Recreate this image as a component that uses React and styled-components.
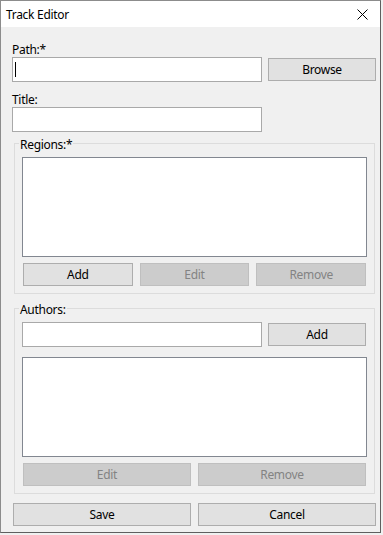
import React from 'react';
import styled, { createGlobalStyle } from 'styled-components';

const GlobalStyle = createGlobalStyle`
  html, body {
    margin: 0;
    padding: 0;
    background: #f0f0f0;
  }
  body {
    font-family: "Noto Sans", "Liberation Sans", sans-serif;
    font-size: 12px;
    letter-spacing: -0.3px;
    color: #000;
  }
`

const Window = styled.div`
  box-sizing: border-box;
  width: 381px;
  height: 533px;
  display: flex;
  flex-direction: column;
  border: 1px solid #8c8c8c;
  border-right-color: #5f5f5f;
  border-bottom-color: #5f5f5f;
  background: #f0f0f0;
`

const TitleBar = styled.div`
  height: 26px;
  flex: none;
  display: flex;
  align-items: center;
  justify-content: space-between;
  background: #fff;
  padding: 0 12px 0 5px;
`

const TitleText = styled.span`
  line-height: 15px;
`

const Client = styled.div`
  flex: 1;
  display: flex;
  flex-direction: column;
  padding: 0 3px 0 11px;
`

const Label = styled.div`
  line-height: 15px;
  margin-top: ${p => p.$top}px;
`

const Row = styled.div`
  display: flex;
  align-items: flex-start;
  gap: 6px;
  margin-top: ${p => p.$top || 0}px;
`

const TextBox = styled.div`
  box-sizing: border-box;
  width: ${p => p.$width}px;
  height: 25px;
  background: #fff;
  border: 1px solid #a9a9a9;
  position: relative;
`

const Caret = styled.span`
  position: absolute;
  left: 2px;
  top: 4px;
  width: 1px;
  height: 15px;
  background: #000;
`

const Button = styled.div`
  box-sizing: border-box;
  height: 23px;
  width: ${p => (p.$width ? `${p.$width}px` : 'auto')};
  margin-top: ${p => p.$top || 0}px;
  display: flex;
  align-items: center;
  justify-content: center;
  line-height: 15px;
  padding-bottom: 1px;
  background: ${p => (p.$disabled ? '#cccccc' : '#e1e1e1')};
  border: 1px solid ${p => (p.$disabled ? '#bfbfbf' : '#adadad')};
  color: ${p => (p.$disabled ? '#838383' : '#000')};
`

const Group = styled.fieldset`
  margin: ${p => p.$top}px 2px 0 2px;
  padding: 0 7px 7px 7px;
  border: 1px solid #dcdcdc;
  min-width: 0;
`

const Legend = styled.legend`
  padding: 0 1px;
  margin-left: -3px;
  line-height: 15px;
  position: relative;
  top: 1px;
`

const ListBox = styled.div`
  box-sizing: border-box;
  height: 100px;
  margin-top: ${p => p.$top}px;
  background: #fff;
  border: 1px solid #828790;
`

const ButtonGrid = styled.div`
  display: grid;
  grid-template-columns: repeat(${p => p.$cols}, 1fr);
  gap: 7px;
  margin: ${p => p.$top}px ${p => p.$inset}px 0 ${p => p.$inset}px;
`

const CloseIcon = () => (
  <svg width="11" height="11" viewBox="0 0 11 11">
    <path d="M0.5 0.5 L10.5 10.5 M10.5 0.5 L0.5 10.5" stroke="#000" strokeWidth="1" fill="none" />
  </svg>
)

export default function App() {
  return (
    <>
      <GlobalStyle />
      <Window>
        <TitleBar>
          <TitleText>Track Editor</TitleText>
          <CloseIcon />
        </TitleBar>
        <Client>
          <Label $top={15}>Path:*</Label>
          <Row>
            <TextBox $width={250}><Caret /></TextBox>
            <Button $width={108} $top={1}>Browse</Button>
          </Row>
          <Label $top={10}>Title:</Label>
          <Row>
            <TextBox $width={250} />
          </Row>

          <Group $top={4}>
            <Legend>Regions:*</Legend>
            <ListBox $top={6} />
            <ButtonGrid $cols={3} $top={6} $inset={1}>
              <Button>Add</Button>
              <Button $disabled>Edit</Button>
              <Button $disabled>Remove</Button>
            </ButtonGrid>
          </Group>

          <Group $top={7}>
            <Legend>Authors:</Legend>
            <Row $top={6}>
              <TextBox $width={240} />
              <Button $width={98} $top={1}>Add</Button>
            </Row>
            <ListBox $top={10} />
            <ButtonGrid $cols={2} $top={6} $inset={1}>
              <Button $disabled>Edit</Button>
              <Button $disabled>Remove</Button>
            </ButtonGrid>
          </Group>

          <ButtonGrid $cols={2} $top={9} $inset={1}>
            <Button>Save</Button>
            <Button>Cancel</Button>
          </ButtonGrid>
        </Client>
      </Window>
    </>
  )
}
